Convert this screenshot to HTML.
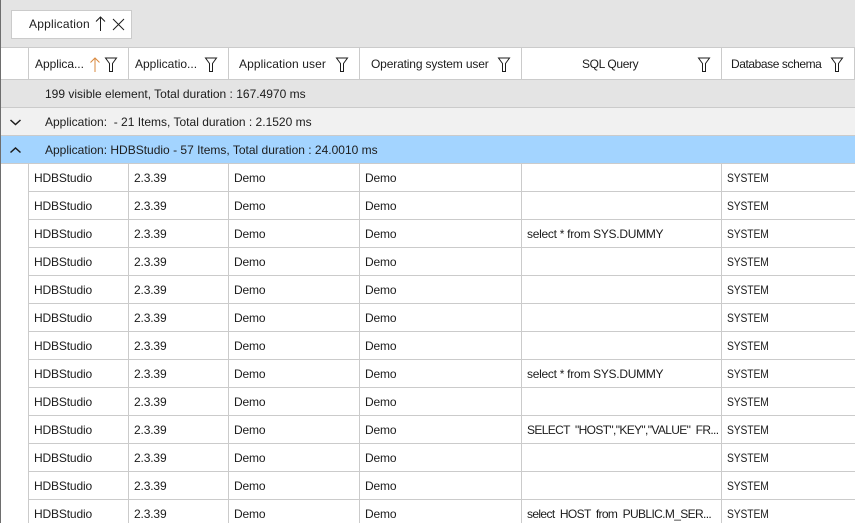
<!DOCTYPE html>
<html><head><meta charset="utf-8">
<style>
html,body{margin:0;padding:0;background:#fff}
#p{position:relative;width:855px;height:523px;overflow:hidden;background:#fff;font:12px/16px "Liberation Sans",sans-serif;color:#1c1c1c;letter-spacing:-.15px}
#p div,#p span{position:absolute;white-space:pre}
#p span.s{transform:scaleX(.86);transform-origin:0 0}
#p span.q{letter-spacing:-.1px}
#p span.c{letter-spacing:-.64px}
#p span.g{letter-spacing:0}
.h{height:1px;left:1px;right:0;background:#cbcbcb}
.v{width:1px;background:#cbcbcb}
svg{position:absolute;overflow:visible}
</style></head><body><div id="p">
<div style="left:0;top:0;width:855px;height:47px;background:#e4e4e4"></div>
<div style="left:11px;top:10px;width:119px;height:27px;background:#fff;border:1px solid #cbcbcb"></div>
<span style="left:29px;top:16px;letter-spacing:.2px">Application</span>
<svg style="left:0;top:0" width="855" height="80" fill="none" stroke="#1c1c1c" stroke-width="1">
<path d="M100.500 31V17M96 21.500l4.500-4.500 4.500 4.500"/>
<path d="M113 19l11 11M124 19l-11 11"/>
<path d="M95 72V58M90.500 62.500l4.500-4.500 4.500 4.500" stroke="#d9893f"/>
<path d="M105.500 58h11l-4 5.500v8h-3v-8z"/>
<path d="M205.500 58h11l-4 5.500v8h-3v-8z"/>
<path d="M336.500 58h11l-4 5.500v8h-3v-8z"/>
<path d="M498.500 58h11l-4 5.500v8h-3v-8z"/>
<path d="M698.500 58h11l-4 5.500v8h-3v-8z"/>
<path d="M831.500 58h11l-4 5.500v8h-3v-8z"/>
</svg>
<div style="left:1px;right:0;top:80px;height:27px;background:#e4e4e4"></div>
<div style="left:1px;right:0;top:108px;height:27px;background:#f1f1f1"></div>
<div style="left:1px;right:0;top:136px;height:27px;background:#a3d4ff"></div>
<div class="h" style="top:47px"></div><div class="h" style="top:79px"></div><div class="h" style="top:107px"></div><div class="h" style="top:135px"></div><div class="h" style="top:163px"></div>
<div class="h" style="top:191px;left:28px"></div><div class="h" style="top:219px;left:28px"></div><div class="h" style="top:247px;left:28px"></div><div class="h" style="top:275px;left:28px"></div><div class="h" style="top:303px;left:28px"></div><div class="h" style="top:331px;left:28px"></div><div class="h" style="top:359px;left:28px"></div><div class="h" style="top:387px;left:28px"></div><div class="h" style="top:415px;left:28px"></div><div class="h" style="top:443px;left:28px"></div><div class="h" style="top:471px;left:28px"></div><div class="h" style="top:499px;left:28px"></div>
<div class="v" style="left:28px;top:48px;height:31px"></div><div class="v" style="left:128px;top:48px;height:31px"></div><div class="v" style="left:228px;top:48px;height:31px"></div><div class="v" style="left:359px;top:48px;height:31px"></div><div class="v" style="left:521px;top:48px;height:31px"></div><div class="v" style="left:721px;top:48px;height:31px"></div><div class="v" style="left:854px;top:48px;height:31px"></div>
<div class="v" style="left:28px;top:164px;height:359px"></div><div class="v" style="left:128px;top:164px;height:359px"></div><div class="v" style="left:228px;top:164px;height:359px"></div><div class="v" style="left:359px;top:164px;height:359px"></div><div class="v" style="left:521px;top:164px;height:359px"></div><div class="v" style="left:721px;top:164px;height:359px"></div>
<div style="left:0;top:0;width:1px;height:523px;background:#6e6e6e"></div>
<svg style="left:0;top:100px" width="30" height="70" fill="none" stroke="#1c1c1c" stroke-width="1.500">
<path d="M10.500 20l5 4.500 5-4.500"/><path d="M10.500 52.500l5-4.500 5 4.500"/>
</svg>
<span style="left:35px;top:56px;letter-spacing:-.05px">Applica...</span>
<span style="left:135px;top:56px;letter-spacing:0">Applicatio...</span>
<span style="left:239px;top:56px;letter-spacing:.1px">Application user</span>
<span style="left:371px;top:56px">Operating system user</span>
<span style="left:582px;top:56px;letter-spacing:-.37px">SQL Query</span>
<span style="left:731px;top:56px;letter-spacing:-.42px">Database schema</span>
<span class="g" style="left:45px;top:86px">199 visible element, Total duration : 167.4970 ms</span>
<span class="g" style="left:45px;top:114px">Application:  - 21 Items, Total duration : 2.1520 ms</span>
<span class="g" style="left:45px;top:142px">Application: HDBStudio - 57 Items, Total duration : 24.0010 ms</span>

<span style="left:34px;top:170px">HDBStudio</span><span style="left:134px;top:170px">2.3.39</span><span style="left:234px;top:170px">Demo</span><span style="left:365px;top:170px">Demo</span><span class="s" style="left:727px;top:170px">SYSTEM</span>
<span style="left:34px;top:198px">HDBStudio</span><span style="left:134px;top:198px">2.3.39</span><span style="left:234px;top:198px">Demo</span><span style="left:365px;top:198px">Demo</span><span class="s" style="left:727px;top:198px">SYSTEM</span>
<span style="left:34px;top:226px">HDBStudio</span><span style="left:134px;top:226px">2.3.39</span><span style="left:234px;top:226px">Demo</span><span style="left:365px;top:226px">Demo</span><span style="left:527px;top:226px;letter-spacing:-.28px">select * from SYS.DUMMY</span><span class="s" style="left:727px;top:226px">SYSTEM</span>
<span style="left:34px;top:254px">HDBStudio</span><span style="left:134px;top:254px">2.3.39</span><span style="left:234px;top:254px">Demo</span><span style="left:365px;top:254px">Demo</span><span class="s" style="left:727px;top:254px">SYSTEM</span>
<span style="left:34px;top:282px">HDBStudio</span><span style="left:134px;top:282px">2.3.39</span><span style="left:234px;top:282px">Demo</span><span style="left:365px;top:282px">Demo</span><span class="s" style="left:727px;top:282px">SYSTEM</span>
<span style="left:34px;top:310px">HDBStudio</span><span style="left:134px;top:310px">2.3.39</span><span style="left:234px;top:310px">Demo</span><span style="left:365px;top:310px">Demo</span><span class="s" style="left:727px;top:310px">SYSTEM</span>
<span style="left:34px;top:338px">HDBStudio</span><span style="left:134px;top:338px">2.3.39</span><span style="left:234px;top:338px">Demo</span><span style="left:365px;top:338px">Demo</span><span class="s" style="left:727px;top:338px">SYSTEM</span>
<span style="left:34px;top:366px">HDBStudio</span><span style="left:134px;top:366px">2.3.39</span><span style="left:234px;top:366px">Demo</span><span style="left:365px;top:366px">Demo</span><span style="left:527px;top:366px;letter-spacing:-.28px">select * from SYS.DUMMY</span><span class="s" style="left:727px;top:366px">SYSTEM</span>
<span style="left:34px;top:394px">HDBStudio</span><span style="left:134px;top:394px">2.3.39</span><span style="left:234px;top:394px">Demo</span><span style="left:365px;top:394px">Demo</span><span class="s" style="left:727px;top:394px">SYSTEM</span>
<span style="left:34px;top:422px">HDBStudio</span><span style="left:134px;top:422px">2.3.39</span><span style="left:234px;top:422px">Demo</span><span style="left:365px;top:422px">Demo</span><span class="c" style="left:527px;top:422px">SELECT  "HOST","KEY","VALUE"  FR...</span><span class="s" style="left:727px;top:422px">SYSTEM</span>
<span style="left:34px;top:450px">HDBStudio</span><span style="left:134px;top:450px">2.3.39</span><span style="left:234px;top:450px">Demo</span><span style="left:365px;top:450px">Demo</span><span class="s" style="left:727px;top:450px">SYSTEM</span>
<span style="left:34px;top:478px">HDBStudio</span><span style="left:134px;top:478px">2.3.39</span><span style="left:234px;top:478px">Demo</span><span style="left:365px;top:478px">Demo</span><span class="s" style="left:727px;top:478px">SYSTEM</span>
<span style="left:34px;top:506px">HDBStudio</span><span style="left:134px;top:506px">2.3.39</span><span style="left:234px;top:506px">Demo</span><span style="left:365px;top:506px">Demo</span><span class="c" style="left:527px;top:506px">select  HOST  from  PUBLIC.M_SER...</span><span class="s" style="left:727px;top:506px">SYSTEM</span>
</div></body></html>
